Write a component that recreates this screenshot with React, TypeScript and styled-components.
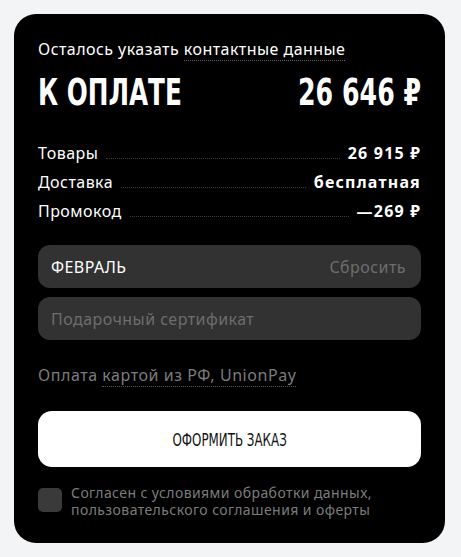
import React from "react";
import styled, { createGlobalStyle } from "styled-components";

const Global = createGlobalStyle`
  html, body { margin: 0; padding: 0; background: #f3f4f6; }
  body { font-family: "Noto Sans", "Inter", sans-serif; }
  * { box-sizing: border-box; }
`;

const Page = styled.div`
  padding: 14px 16px 14px 14px;
  width: 461px;
  min-height: 557px;
`;

const Card = styled.div`
  background: #000;
  border-radius: 22px;
  padding: 26px 24px 25px 24px;
  color: #fff;
  display: flex;
  flex-direction: column;
`;

const Note = styled.div`
  font-size: 16px;
  letter-spacing: 0.45px;
  line-height: 18px;
  color: #fff;
`;

const Dotted = styled.span<{ $color?: string }>`
  border-bottom: 1px dotted ${(p) => p.$color ?? "#777"};
`;

const TotalRow = styled.div`
  display: flex;
  justify-content: space-between;
  align-items: center;
  margin-top: 14px;
  font-family: "DejaVu Sans", sans-serif;
  font-weight: 700;
  font-size: 38px;
  line-height: 40px;
`;

const Squeeze = styled.span<{ $sx: number; $origin: "left" | "right" | "center"; $trim?: number }>`
  display: inline-block;
  flex: none;
  white-space: nowrap;
  transform: scaleX(${(p) => p.$sx});
  transform-origin: ${(p) => p.$origin} center;
  margin-right: ${(p) => (p.$trim ? `-${p.$trim}px` : "0")};
`;

const Lines = styled.div`
  margin-top: 32px;
  display: flex;
  flex-direction: column;
  gap: 10px;
`;

const Line = styled.div`
  display: flex;
  align-items: baseline;
  font-size: 16px;
  letter-spacing: 0.45px;
  line-height: 19px;
`;

const Leader = styled.div`
  flex: 1;
  margin: 0 8px;
  border-bottom: 1px dotted #3a3a3a;
`;

const Value = styled.span`
  font-weight: 700;
  letter-spacing: 1.2px;
`;

const Field = styled.div<{ $first?: boolean }>`
  height: 43px;
  border-radius: 12px;
  background: #323232;
  display: flex;
  align-items: center;
  justify-content: space-between;
  padding: 0 15px 0 13px;
  font-size: 16px;
  letter-spacing: 0.45px;
  margin-top: ${(p) => (p.$first ? "24px" : "9px")};
`;

const FieldText = styled.span<{ $muted?: boolean }>`
  color: ${(p) => (p.$muted ? "#6d6d6d" : "#fff")};
`;

const Payment = styled.div`
  margin-top: 24px;
  font-size: 16px;
  letter-spacing: 0.55px;
  color: #7c7c7c;
`;

const Button = styled.button`
  margin-top: 25px;
  height: 56px;
  border: none;
  border-radius: 14px;
  background: #fff;
  color: #111;
  font-family: "DejaVu Sans", sans-serif;
  font-size: 18px;
  font-weight: 500;
  display: flex;
  align-items: center;
  justify-content: center;
`;

const Agree = styled.label`
  margin-top: 18px;
  display: flex;
  gap: 9px;
  align-items: flex-start;
  font-size: 14px;
  letter-spacing: 0.42px;
  line-height: 17px;
  color: #7c7c7c;
`;

const AgreeText = styled.span`
  display: flex;
  flex-direction: column;
  margin-top: -1px;
`;

const Box = styled.span`
  flex: none;
  width: 24px;
  height: 24px;
  border-radius: 5px;
  background: #3a3a3a;
  margin-top: 3px;
`;

export default function App() {
  return (
    <>
      <Global />
      <Page>
        <Card>
          <Note>
            Осталось указать <Dotted $color="#666">контактные данные</Dotted>
          </Note>
          <TotalRow>
            <Squeeze $sx={0.65} $origin="left" $trim={76}>К ОПЛАТЕ</Squeeze>
            <Squeeze $sx={0.665} $origin="right">26 646 ₽</Squeeze>
          </TotalRow>
          <Lines>
            <Line>
              <span>Товары</span>
              <Leader />
              <Value>26 915 ₽</Value>
            </Line>
            <Line>
              <span>Доставка</span>
              <Leader />
              <Value>бесплатная</Value>
            </Line>
            <Line>
              <span>Промокод</span>
              <Leader />
              <Value>—269 ₽</Value>
            </Line>
          </Lines>
          <Field $first>
            <FieldText>ФЕВРАЛЬ</FieldText>
            <FieldText $muted>Сбросить</FieldText>
          </Field>
          <Field>
            <FieldText $muted>Подарочный сертификат</FieldText>
          </Field>
          <Payment>
            Оплата <Dotted $color="#555">картой из РФ, UnionPay</Dotted>
          </Payment>
          <Button>
            <Squeeze $sx={0.66} $origin="center">ОФОРМИТЬ ЗАКАЗ</Squeeze>
          </Button>
          <Agree>
            <Box />
            <AgreeText>
              <span>Согласен с условиями обработки данных,</span>
              <span>пользовательского соглашения и оферты</span>
            </AgreeText>
          </Agree>
        </Card>
      </Page>
    </>
  );
}
